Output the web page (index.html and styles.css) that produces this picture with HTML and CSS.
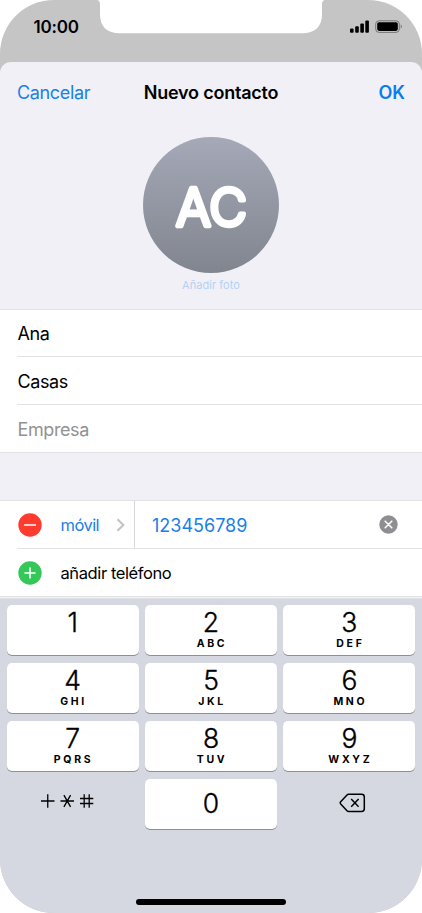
FILE: index.html
```html
<!DOCTYPE html>
<html lang="es">
<head>
<meta charset="utf-8">
<title>Nuevo contacto</title>
<link rel="stylesheet" href="styles.css">
</head>
<body>
<div class="phone">
  <svg class="notch" width="230" height="34" viewBox="0 0 230 34"><path d="M0 0C3.500 0 4 2 4 5V14C4 27 11 33.300 24 33.300H206C219 33.300 226 27 226 14V5C226 2 226.500 0 230 0Z" fill="#fff"/></svg>
  <header class="status">
    <span class="time">10:00</span>
    <svg class="indicators" width="54" height="14" viewBox="0 0 54 14">
      <rect x="0" y="8.500" width="3.600" height="4.300" rx="1"/><rect x="5.200" y="6.200" width="3.600" height="6.600" rx="1"/><rect x="10.300" y="3.500" width="3.600" height="9.300" rx="1"/><rect x="15.300" y=".5" width="3.600" height="12.300" rx="1"/>
      <rect x="25.700" y=".8" width="23.600" height="11.600" rx="3.300" fill="none" stroke="#777"/><rect x="27.200" y="2.300" width="20.600" height="8.600" rx="1.800"/><path d="M50.700 4.600C52.300 5.200 52.300 8 50.700 8.600Z" fill="#777"/>
    </svg>
  </header>
  <main class="sheet">
    <nav class="nav"><span class="cancel">Cancelar</span><h1>Nuevo contacto</h1><span class="ok">OK</span></nav>
    <section class="photo">
      <div class="avatar"><svg width="136" height="136" viewBox="0 0 136 136"><text class="initials" x="68.500" y="88.700" text-anchor="middle" textLength="71" lengthAdjust="spacingAndGlyphs">AC</text></svg></div>
      <span class="add-photo">Añadir foto</span>
    </section>
    <section class="group names">
      <div class="row"><span>Ana</span></div>
      <div class="row"><span>Casas</span></div>
      <div class="row"><span class="placeholder">Empresa</span></div>
    </section>
    <section class="group phones">
      <div class="row">
        <svg class="action" width="24" height="24" viewBox="0 0 24 24"><circle cx="12" cy="12" r="11.700" fill="#ff3b30"/><path d="M6.700 12H17.300" stroke="#fff" stroke-width="1.700" stroke-linecap="round"/></svg>
        <span class="kind">móvil</span>
        <svg class="chevron" width="10" height="14" viewBox="0 0 10 14"><path d="M1.500 1.200L7.300 7L1.500 12.800" fill="none" stroke="#c4c4c7" stroke-width="2.200"/></svg>
        <span class="number">123456789</span>
        <svg class="clear" width="19" height="19" viewBox="0 0 19 19"><circle cx="9.500" cy="9.500" r="9.200" fill="#8e8e93"/><path d="M6.200 6.200L12.800 12.800M12.800 6.200L6.200 12.800" stroke="#fff" stroke-width="1.600" stroke-linecap="round"/></svg>
      </div>
      <div class="row">
        <svg class="action" width="24" height="24" viewBox="0 0 24 24"><circle cx="12" cy="12" r="11.700" fill="#34c759"/><path d="M7 12H17M12 7V17" stroke="#fff" stroke-width="1.600" stroke-linecap="round"/></svg>
        <span class="add-phone">añadir teléfono</span>
      </div>
    </section>
  </main>
  <section class="keyboard">
    <div class="keys">
      <div class="key"><b>1</b></div>
      <div class="key"><b>2</b><small>ABC</small></div>
      <div class="key"><b>3</b><small>DEF</small></div>
      <div class="key"><b>4</b><small>GHI</small></div>
      <div class="key"><b>5</b><small>JKL</small></div>
      <div class="key"><b>6</b><small>MNO</small></div>
      <div class="key"><b>7</b><small>PQRS</small></div>
      <div class="key"><b>8</b><small>TUV</small></div>
      <div class="key"><b>9</b><small>WXYZ</small></div>
      <div class="key plain symbols"><svg width="54" height="16" viewBox="0 0 54 16"><path d="M1 8H14.500M7.750 1.200V14.800M20.500 8H34M23.900 2.100L30.600 13.900M30.600 2.100L23.900 13.900M40 5.500H53.300M40 10.500H53.300M44.200 1.200V14.800M49.200 1.200V14.800" fill="none" stroke="#000" stroke-width="1.300"/></svg></div>
      <div class="key zero"><b>0</b></div>
      <div class="key plain delete"><svg width="27" height="20" viewBox="0 0 27 20"><path d="M9.500 1.300H22.500Q25.300 1.300 25.300 4V15.700Q25.300 18.400 22.500 18.400H9.500Q8.700 18.400 8 17.700L1.700 11Q.7 9.850 1.700 8.700L8 2Q8.700 1.300 9.500 1.300ZM12.200 6L19.600 13.700M19.600 6L12.200 13.700" fill="none" stroke="#000" stroke-width="1.500" stroke-linejoin="round"/></svg></div>
    </div>
    <div class="home"></div>
  </section>
</div>
</body>
</html>
```
FILE: styles.css
```css
* { box-sizing: border-box; }
body { margin: 0; background: #fff; font-family: Inter, "Liberation Sans", sans-serif; color: #000; }
.phone { position: relative; display: flex; flex-direction: column; width: 422px; height: 913px; overflow: hidden; border-radius: 54px; background: #c5c5c5; }
.notch { position: absolute; left: 96px; top: 0; }
.status { display: flex; justify-content: space-between; height: 62px; padding: 20px 18px 0 33.500px; flex: none; }
.time { font-size: 17px; line-height: 14px; font-weight: 600; letter-spacing: -.2px; }
.indicators { display: block; }
.sheet { height: 536px; flex: none; border-radius: 11px 11px 0 0; background: #f1f0f6; overflow: hidden; }
.nav { display: grid; grid-template-columns: 1fr auto 1fr; align-items: center; height: 60px; padding: 0 17px; }
.nav h1 { margin: 0; font-size: 18px; font-weight: 600; letter-spacing: -.22px; }
.cancel, .ok { font-size: 18px; color: #1a7fe8; }
.cancel { letter-spacing: -.35px; }
.ok { color: #087cf0; font-weight: 600; text-align: right; }
.photo { display: flex; flex-direction: column; align-items: center; height: 187px; padding-top: 14.500px; }
.avatar { width: 136px; height: 136px; border-radius: 50%; background: linear-gradient(#a5a9b8, #80858e); }
.avatar svg { display: block; }
.initials { font-size: 52.500px; font-weight: 300; fill: #fff; stroke: #fff; stroke-width: 4.600px; stroke-linejoin: round; }
.add-photo { margin-top: 5.500px; font-size: 11px; line-height: 14px; letter-spacing: .05px; color: #b4d2f3; }
.group { background: #fff; border-top: 1px solid #e3e3e6; border-bottom: 1px solid #e3e3e6; }
.row { display: flex; align-items: center; height: 48px; margin-left: 17px; padding-left: 1px; font-size: 18px; letter-spacing: -.4px; border-bottom: 1px solid #e3e3e6; }
.row:first-child { height: 47px; }
.row:last-child { height: 47px; border-bottom: 0; }
.names .row { padding: 2px 0 0 .5px; }
.names .row:first-child { padding-top: 1px; }
.placeholder { color: #929292; }
.phones { margin-top: 47px; }
.phones .row:first-child { height: 48px; }
.action { flex: none; }
.kind { width: 55px; margin-left: 18.500px; font-size: 16.500px; letter-spacing: -.55px; color: #1a7fe8; }
.chevron { margin-right: 8px; }
.number { align-self: stretch; display: flex; align-items: center; padding: 1px 0 0 17.500px; border-left: 1px solid #d8d8db; color: #1a7fe8; letter-spacing: 0; }
.clear { margin-left: auto; margin-right: 24px; }
.add-phone { margin-left: 18.500px; font-size: 16.500px; letter-spacing: -.4px; }
.keyboard { display: flex; flex-direction: column; align-items: center; flex: 1; border-top: 1px solid #dfe1e6; background: #d5d8e0; }
.keys { display: grid; grid-template-columns: repeat(3, 132px); grid-auto-rows: 50.300px; column-gap: 6.400px; row-gap: 7.900px; padding-top: 5.500px; }
.key { display: flex; flex-direction: column; align-items: center; border-radius: 5px; background: #fff; box-shadow: 0 1px 0 #8c8f95; }
.key b { margin-top: 2px; font-size: 26.500px; line-height: 31px; font-weight: 300; -webkit-text-stroke: .35px #000; }
.key small { margin: 0 0 0 2px; font-size: 10.500px; line-height: 12px; font-weight: 700; letter-spacing: 2.700px; }
.key.zero b { margin-top: 9px; }
.key.plain { background: none; box-shadow: none; }
.symbols { padding: 14px 11px 0 0; }
.delete { padding: 14px 0 0 6px; }
.home { width: 150px; height: 5.500px; margin: auto 0 8.500px; border-radius: 3px; background: #000; }
```
